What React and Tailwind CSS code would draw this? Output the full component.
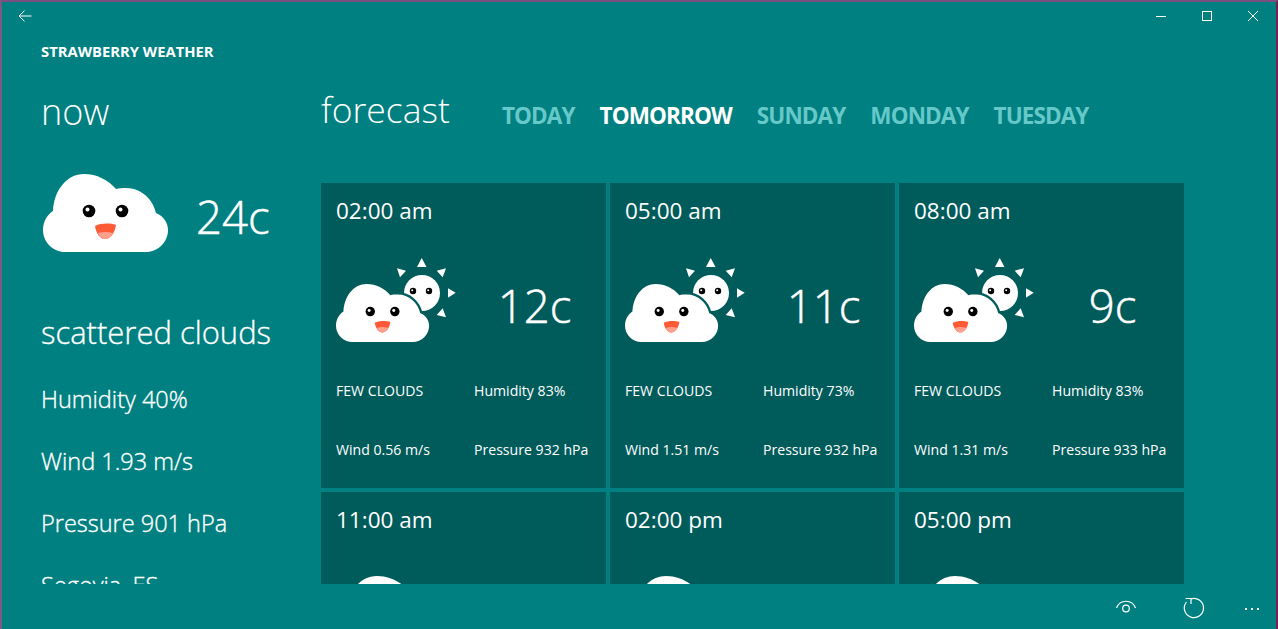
const days = ["TODAY", "TOMORROW", "SUNDAY", "MONDAY", "TUESDAY"];

const cards = [
  { time: "02:00 am", temp: "12c", humidity: "83%", wind: "0.56", pressure: "932" },
  { time: "05:00 am", temp: "11c", humidity: "73%", wind: "1.51", pressure: "932" },
  { time: "08:00 am", temp: "9c", humidity: "83%", wind: "1.31", pressure: "933" },
  { time: "11:00 am", temp: "14c", humidity: "60%", wind: "1.20", pressure: "933", clear: true },
  { time: "02:00 pm", temp: "18c", humidity: "45%", wind: "1.44", pressure: "932", clear: true },
  { time: "05:00 pm", temp: "17c", humidity: "50%", wind: "1.10", pressure: "931", clear: true },
];

// cloud drawn in a 125x78 box
function CloudShape({ outline }) {
  return (
    <g>
      <path
        d="M22 78 C10 78 0 68 0 56 C0 47 5 40 10 37 C11 16 24 0 41 0 C54 0 65 6 73 15 C76 14 79 14 83 14 C98 14 110 25 113 39 C120 42 125 48 125 56 C125 68 115 78 103 78 Z"
        fill="#fff"
        stroke={outline}
        strokeWidth={outline ? 6 : 0}
        paintOrder="stroke"
      />
      <circle cx="46" cy="37" r="6.3" fill="#000" />
      <circle cx="44.5" cy="35.5" r="2" fill="#fff" />
      <circle cx="79" cy="37" r="6.3" fill="#000" />
      <circle cx="77.5" cy="35.5" r="2" fill="#fff" />
      <path d="M52 52 C58 49 67 49 73 51 C72 58 68 65 62 65 C57 65 53 59 52 52 Z" fill="#ff5a36" />
      <path d="M55 59 C60 57.5 65 57.5 70 59 C68 63 65 65 62 65 C59 65 57 63 55 59 Z" fill="#ffa08c" />
    </g>
  );
}

function Cloud() {
  return (
    <svg viewBox="0 0 125 78" className="h-[78px] w-[125px] shrink-0">
      <CloudShape />
    </svg>
  );
}

function SunCloud() {
  return (
    <svg viewBox="0 0 120 84" className="h-[84px] w-[120px] shrink-0 overflow-visible">
      <path d="M85.7 0 L81 9 L90.5 9 Z" fill="#fff" />
      <path d="M61 10.3 L70 12.7 L64 19.3 Z" fill="#fff" />
      <path d="M110 10.3 L100.7 12.7 L106.7 19.3 Z" fill="#fff" />
      <path d="M112 30.3 L119.7 34.7 L112 39.7 Z" fill="#fff" />
      <path d="M106.7 50.3 L110 59.3 L100.7 57 Z" fill="#fff" />
      <circle cx="86" cy="35" r="18" fill="#fff" />
      <circle cx="77" cy="33" r="3.2" fill="#000" />
      <circle cx="76.2" cy="32.2" r="1" fill="#fff" />
      <circle cx="93" cy="33" r="3.2" fill="#000" />
      <circle cx="92.2" cy="32.2" r="1" fill="#fff" />
      <g transform="translate(0 26) scale(0.745)">
        <CloudShape outline="#005b5b" />
      </g>
    </svg>
  );
}

function ForecastCard({ card }) {
  return (
    <div className="flex h-[305px] w-[285px] shrink-0 flex-col bg-[#005b5b] px-[15px] text-white">
      <div className="mt-[14px] h-[28px] text-[22.5px] leading-[28px]">{card.time}</div>
      {card.clear ? (
        <div className="mt-[42px] flex h-[78px] items-center">
          <Cloud />
        </div>
      ) : (
        <>
          <div className="mt-[33px] flex h-[84px] items-center">
            <SunCloud />
            <div className="flex-1 pl-[22px] pt-[10px] text-center text-[45.5px] leading-[60px] font-light [-webkit-text-stroke:0.5px_#fff]">{card.temp}</div>
          </div>
          <div className="mt-[39px] grid grid-cols-[138px_1fr] gap-y-[40px] text-[14.1px] leading-[19px]">
            <span>FEW CLOUDS</span>
            <span>Humidity {card.humidity}</span>
            <span>Wind {card.wind} m/s</span>
            <span>Pressure {card.pressure} hPa</span>
          </div>
        </>
      )}
    </div>
  );
}

export default function App() {
  return (
    <div className="relative flex h-[629px] w-[1278px] flex-col overflow-hidden border-t-2 border-r-2 border-l-2 border-t-[#7b4f80] border-r-[#7a2050] border-l-[#7b5a86] bg-[#008080] font-['Open_Sans',sans-serif] text-white">
      <div className="flex h-[28px] shrink-0 items-center justify-between">
        <div className="flex w-[46px] justify-center">
          <svg viewBox="0 0 14 12" className="h-[12px] w-[14px]" fill="none" stroke="#fff" strokeWidth="1">
            <path d="M13.5 6 H1 M6.5 0.7 L1 6 L6.5 11.3" />
          </svg>
        </div>
        <div className="flex">
          <div className="flex w-[46px] justify-center">
            <svg viewBox="0 0 12 12" className="h-[12px] w-[12px]" fill="none" stroke="#fff" strokeWidth="1">
              <path d="M1 6.5 H11" />
            </svg>
          </div>
          <div className="flex w-[46px] justify-center">
            <svg viewBox="0 0 12 12" className="h-[12px] w-[12px]" fill="none" stroke="#fff" strokeWidth="1">
              <rect x="1.5" y="1.5" width="9" height="9" />
            </svg>
          </div>
          <div className="flex w-[46px] justify-center">
            <svg viewBox="0 0 12 12" className="h-[12px] w-[12px]" fill="none" stroke="#fff" strokeWidth="1">
              <path d="M1 1 L11 11 M11 1 L1 11" />
            </svg>
          </div>
        </div>
      </div>
      <div className="mt-[11px] ml-[39px] h-[20px] shrink-0 text-[14.8px] leading-[20px] font-bold">STRAWBERRY WEATHER</div>

      <div className="flex h-[523px] shrink-0">
        <div className="h-[523px] w-[319px] shrink-0 overflow-hidden pl-[39px] text-[23.5px] leading-[32px] font-light [-webkit-text-stroke:0.35px_#fff]">
          <div className="mt-[26px] h-[50px] text-[36px] leading-[50px] [-webkit-text-stroke:0]">now</div>
          <div className="mt-[37px] flex h-[78px] items-center pl-[2px]">
            <Cloud />
            <div className="ml-[28px] pt-[6px] text-[45.5px] leading-[60px] [-webkit-text-stroke:0.5px_#fff]">24c</div>
          </div>
          <div className="mt-[60px] text-[31px] leading-[40px]">scattered clouds</div>
          <div className="mt-[31px]">Humidity 40%</div>
          <div className="mt-[30px]">Wind 1.93 m/s</div>
          <div className="mt-[30px]">Pressure 901 hPa</div>
          <div className="mt-[30px]">Segovia, ES</div>
        </div>

        <div className="min-w-0 flex-1">
          <div className="mt-[24px] flex h-[50px] items-center">
            <div className="pb-[2px] text-[35.5px] leading-[50px] font-light">forecast</div>
            <div className="ml-[52px] flex gap-[25px] pt-[12px] text-[22.5px] font-bold tracking-[-0.9px] text-[#66c8c8]">
              {days.map((d) => (
                <span key={d} className={d === "TOMORROW" ? "text-white" : ""}>{d}</span>
              ))}
            </div>
          </div>
          <div className="mt-[48px] grid h-[401px] grid-cols-[285px_285px_285px] gap-[4px] overflow-hidden">
            {cards.map((c) => (
              <ForecastCard key={c.time} card={c} />
            ))}
          </div>
        </div>
      </div>

      <div className="flex flex-1 items-center justify-end">
        <div className="flex w-[68px] justify-center">
          <svg viewBox="0 0 22 15" className="h-[15px] w-[22px]" fill="none" stroke="#fff" strokeWidth="1.2">
            <path d="M1.5 9 C5 0 17 0 20.5 9" />
            <circle cx="11" cy="9.5" r="3.3" />
          </svg>
        </div>
        <div className="flex w-[68px] justify-center pt-[2px]">
          <svg viewBox="0 0 22 22" className="h-[22px] w-[22px]" fill="none" stroke="#fff" strokeWidth="1.2">
            <path d="M7.5 2 A9.6 9.6 0 1 1 3.4 5" />
            <path d="M2.5 1.5 H8 V7" />
          </svg>
        </div>
        <div className="flex w-[48px] justify-center pt-[5px]">
          <svg viewBox="0 0 16 4" className="h-[4px] w-[16px]" fill="#fff">
            <rect x="1" y="1" width="2" height="2" />
            <rect x="7" y="1" width="2" height="2" />
            <rect x="13" y="1" width="2" height="2" />
          </svg>
        </div>
      </div>
    </div>
  );
}
